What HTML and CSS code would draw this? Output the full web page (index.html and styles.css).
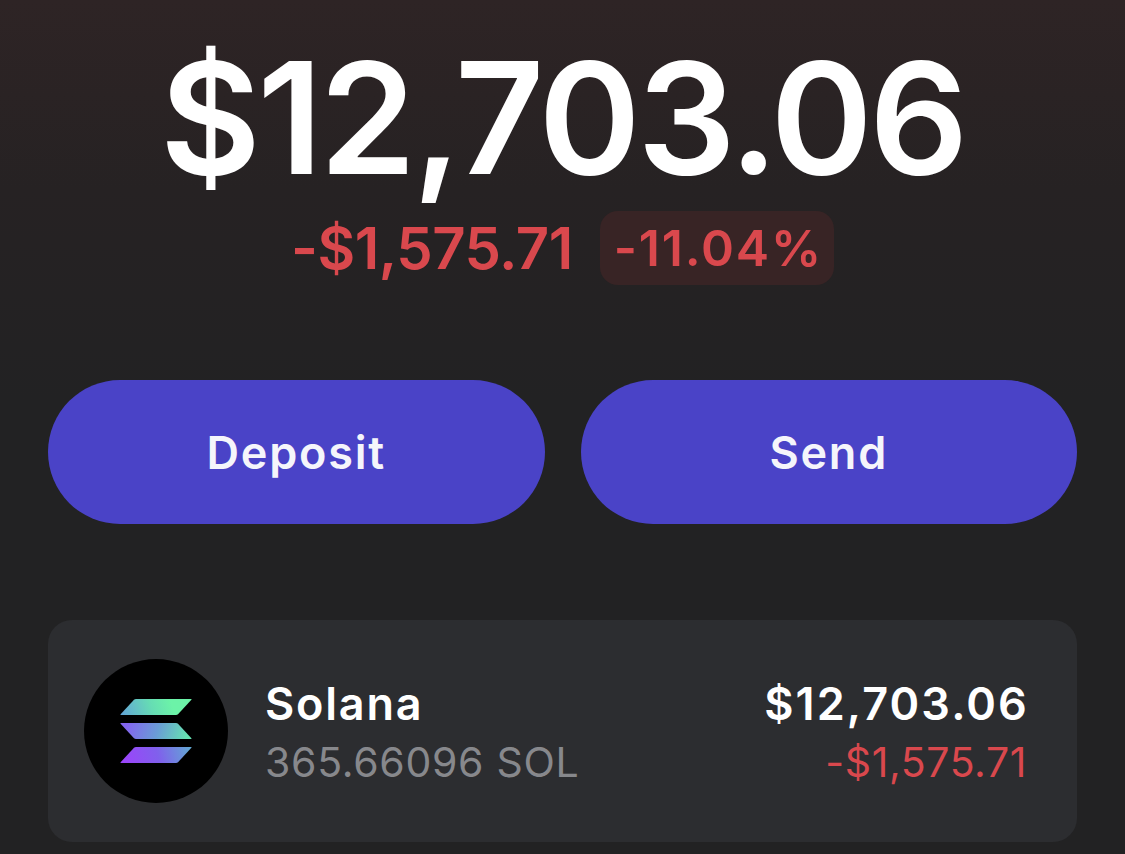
FILE: index.html
```html
<!DOCTYPE html>
<html lang="en">
<head>
<meta charset="utf-8">
<title>Wallet</title>
<link rel="stylesheet" href="styles.css">
</head>
<body>
<main class="screen">
  <section class="summary">
    <h1 class="balance">$12,703.06</h1>
    <div class="change">
      <span class="change-value">-$1,575.71</span>
      <span class="change-pct">-11.04%</span>
    </div>
  </section>
  <div class="actions">
    <button class="action">Deposit</button>
    <button class="action">Send</button>
  </div>
  <section class="token">
    <div class="token-logo">
      <svg width="72" height="64" viewBox="0 0 72 64" aria-hidden="true">
        <defs>
          <linearGradient id="sol1" gradientUnits="userSpaceOnUse" x1="2" y1="16" x2="50" y2="0">
            <stop offset="0" stop-color="#62a6d6"/>
            <stop offset="0.6" stop-color="#66dcb4"/>
            <stop offset="1" stop-color="#6cf3a8"/>
          </linearGradient>
          <linearGradient id="sol2" gradientUnits="userSpaceOnUse" x1="8" y1="24" x2="66" y2="40">
            <stop offset="0" stop-color="#8366ee"/>
            <stop offset="0.5" stop-color="#6a9cd6"/>
            <stop offset="1" stop-color="#66e2b2"/>
          </linearGradient>
          <linearGradient id="sol3" gradientUnits="userSpaceOnUse" x1="6" y1="64" x2="70" y2="48">
            <stop offset="0" stop-color="#9a46fa"/>
            <stop offset="0.5" stop-color="#8060ec"/>
            <stop offset="1" stop-color="#62a8d4"/>
          </linearGradient>
        </defs>
        <path fill="url(#sol1)" d="M14 .8Q14.8 0 16 0H71Q72 0 71.4 .8L58 15.2Q57.2 16 56 16H1Q0 16 .6 15.2Z"/>
        <path fill="url(#sol2)" d="M.6 24.8Q0 24 1 24H56Q57.2 24 58 24.8L71.4 39.2Q72 40 71 40H16Q14.8 40 14 39.2Z"/>
        <path fill="url(#sol3)" d="M14 48.8Q14.8 48 16 48H71Q72 48 71.4 48.8L58 63.2Q57.2 64 56 64H1Q0 64 .6 63.2Z"/>
      </svg>
    </div>
    <div class="token-info">
      <div class="token-name">Solana</div>
      <div class="token-amount">365.66096 SOL</div>
    </div>
    <div class="token-values">
      <div class="token-usd">$12,703.06</div>
      <div class="token-delta">-$1,575.71</div>
    </div>
  </section>
</main>
</body>
</html>
```
FILE: styles.css
```css
* { box-sizing: border-box; }
html, body { margin: 0; height: 100%; }
body {
  background: linear-gradient(180deg, #2e2425 0, #262223 190px, #222223 400px);
  font-family: Inter, "Liberation Sans", sans-serif;
  overflow: hidden;
}
.screen { padding: 24px 48px 0; }
.summary { display: flex; flex-direction: column; align-items: center; }
.balance {
  margin: 0;
  font-size: 155px;
  font-weight: 600;
  line-height: 188px;
  letter-spacing: -3.5px;
  color: #fff;
  white-space: nowrap;
}
.change { display: flex; align-items: center; gap: 27px; height: 74px; margin-top: -1px; }
.change-value { font-size: 58px; font-weight: 600; color: #d9484d; letter-spacing: -0.5px; }
.change-pct {
  display: flex; align-items: center;
  height: 74px; padding: 0 11px 0 14px;
  border-radius: 18px;
  background: #382425;
  font-size: 50px; font-weight: 600; color: #d9484d;
  letter-spacing: 1.8px;
}
.actions { display: grid; grid-template-columns: 1fr 1fr; gap: 36px; margin-top: 95px; }
.action {
  height: 144px;
  border: 0;
  border-radius: 72px;
  background: #4a43c7;
  color: #f5f5fb;
  font-family: inherit;
  font-size: 45px;
  font-weight: 600;
  letter-spacing: 1.8px;
}
.token {
  display: flex; align-items: center;
  height: 222px;
  margin-top: 96px;
  padding: 0 48px 0 36px;
  border-radius: 24px;
  background: #2c2d30;
}
.token-logo {
  flex: none;
  width: 144px; height: 144px;
  display: flex; align-items: center; justify-content: center;
  border-radius: 50%;
  background: #000;
  margin-right: 37px;
}
.token-info { flex: 1; }
.token-name { font-size: 45px; font-weight: 600; color: #fff; line-height: 54px; letter-spacing: 1.8px; }
.token-amount { font-size: 41px; color: #87888c; line-height: 48px; margin-top: 7px; letter-spacing: 0.7px; }
.token-values { text-align: right; }
.token-usd { font-size: 45px; font-weight: 600; color: #fff; line-height: 54px; letter-spacing: 2.1px; }
.token-delta { font-size: 41px; color: #d9484d; line-height: 48px; margin: 7px 2px 0 0; letter-spacing: 0.6px; }
```
